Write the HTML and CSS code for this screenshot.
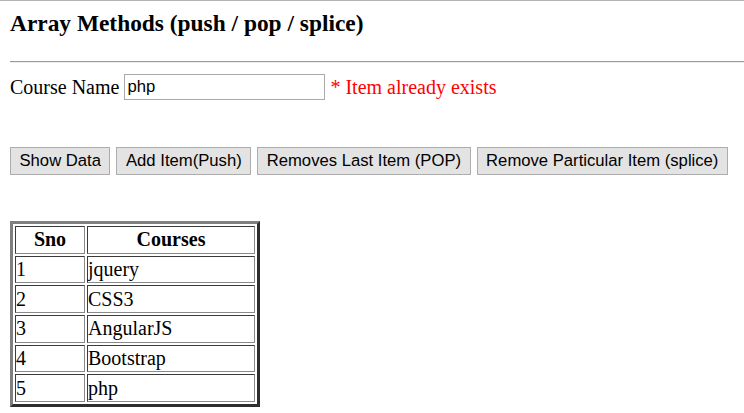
FILE: index.html
```html
<!DOCTYPE html>
<html>
<head>
<meta charset="utf-8">
<title>Array Methods</title>
<link rel="stylesheet" href="styles.css">
</head>
<body>
<div class="topline"></div>
<div class="page">
  <h3 class="title">Array Methods (push / pop / splice)</h3>
  <hr class="rule">
  <div class="form-row">Course Name <input class="course-input" type="text" value="php"> <span class="error">* Item already exists</span></div>
  <div class="actions">
    <button class="btn">Show Data</button>
    <button class="btn">Add Item(Push)</button>
    <button class="btn">Removes Last Item (POP)</button>
    <button class="btn">Remove Particular Item (splice)</button>
  </div>
  <table class="grid">
    <thead>
      <tr><th class="col-sno">Sno</th><th class="col-course">Courses</th></tr>
    </thead>
    <tbody>
      <tr><td>1</td><td>jquery</td></tr>
      <tr><td>2</td><td>CSS3</td></tr>
      <tr><td>3</td><td>AngularJS</td></tr>
      <tr><td>4</td><td>Bootstrap</td></tr>
      <tr><td>5</td><td>php</td></tr>
    </tbody>
  </table>
</div>
</body>
</html>
```

FILE: styles.css
```css
html, body {
  margin: 0;
  padding: 0;
  background: #ffffff;
}
body {
  font-family: "Liberation Serif", "Times New Roman", serif;
  font-size: 20px;
  color: #000;
}
.topline {
  height: 1px;
  background: #b4b4b4;
}
.page {
  padding: 0 0 0 10px;
}
.title {
  margin: 9px 0 0 0;
  font-size: 23.4px;
  font-weight: bold;
  line-height: 27px;
}
.rule {
  margin: 24px 0 0 0;
  height: 0;
  border: 0;
  border-top: 1px solid #9a9a9a;
  border-bottom: 1px solid #eeeeee;
}
.form-row {
  margin-top: 10px;
  height: 28px;
  line-height: 28px;
}
.course-input {
  box-sizing: border-box;
  width: 201px;
  height: 26px;
  border: 1px solid #a9a9a9;
  padding: 0 2px;
  margin: 0;
  font-family: "Liberation Sans", Arial, sans-serif;
  font-size: 16.67px;
  vertical-align: 2px;
  background: #fff;
  color: #000;
}
.error {
  color: #ff0000;
}
.actions {
  display: flex;
  gap: 6px;
  margin-top: 46px;
}
.btn {
  box-sizing: border-box;
  height: 28px;
  padding: 0 8.5px;
  margin: 0;
  border: 1px solid #adadad;
  background: #e3e3e3;
  font-family: "Liberation Sans", Arial, sans-serif;
  font-size: 16.67px;
  color: #000;
  border-radius: 0;
}
.grid {
  margin-top: 46px;
  border-collapse: separate;
  border-spacing: 2px;
  border-style: solid;
  border-width: 3px;
  border-color: #808080 #2e2e2e #2e2e2e #808080;
}
.grid th, .grid td {
  border-style: solid;
  border-width: 1px;
  border-color: #3a3a3a #8a8a8a #8a8a8a #3a3a3a;
  padding: 0 1px;
  height: 27.67px;
  box-sizing: border-box;
  line-height: 23px;
  font-size: 20px;
}
.grid th {
  font-weight: bold;
  text-align: center;
}
.grid td {
  text-align: left;
  padding-left: 0;
}
.col-sno {
  width: 70px;
}
.col-course {
  width: 168px;
}
```
